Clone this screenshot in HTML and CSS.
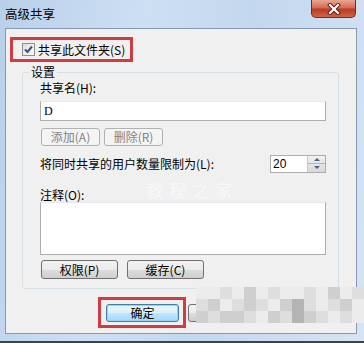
FILE: index.html
```html
<!DOCTYPE html>
<html lang="zh-CN">

<head>
    <meta charset="utf-8">
    <link rel="stylesheet" href="styles.css">
</head>

<body>
    <div class="window">
        <div class="titlebar">
            <div class="title">高级共享</div>
            <div class="close-btn">
                <svg width="16" height="12" viewBox="0 0 16 12">
                    <path d="M4 2 L12 10 M12 2 L4 10" stroke="#5a1a10" stroke-width="4" stroke-linecap="square"/>
                    <path d="M4 2 L12 10 M12 2 L4 10" stroke="#ffffff" stroke-width="2.2" stroke-linecap="square"/>
                </svg>
            </div>
        </div>

        <div class="client">
            <!-- share checkbox, highlighted -->
            <div class="share-row highlight">
                <span class="checkbox">
                    <svg width="11" height="11" viewBox="0 0 11 11">
                        <path d="M2 5.5 L4.5 8 L9 2.5" fill="none" stroke="#3d4f86" stroke-width="2"/>
                    </svg>
                </span>
                <span>共享此文件夹(S)</span>
            </div>

            <fieldset class="group">
                <legend>设置</legend>
                <div class="group-body">
                    <div class="label">共享名(H):</div>
                    <div class="textbox">D</div>

                    <div class="btn-row small-gap">
                        <button class="btn narrow" disabled>添加(A)</button>
                        <button class="btn narrow" disabled>删除(R)</button>
                    </div>

                    <div class="limit-row">
                        <span>将同时共享的用户数量限制为(L):</span>
                        <div class="spinner">
                            <span class="spin-value">20</span>
                            <span class="spin-arrows">
                                <span class="arrow up"></span>
                                <span class="arrow down"></span>
                            </span>
                        </div>
                    </div>

                    <div class="label comment-label">注释(O):</div>
                    <div class="textarea"></div>

                    <div class="btn-row wide-gap">
                        <button class="btn wide">权限(P)</button>
                        <button class="btn wide">缓存(C)</button>
                    </div>
                </div>
            </fieldset>

            <div class="footer">
                <div class="highlight ok-wrap">
                    <button class="btn default">确定</button>
                </div>
                <button class="btn footer-btn">取消</button>
            </div>

            <div class="watermark">教程之家</div>
        </div>

        <!-- pixelated area over the bottom right -->
        <div class="mosaic">
            <span class="m1"></span><span class="m1"></span><span class="m2"></span><span class="m1"></span><span class="m3"></span><span class="m1"></span><span class="m2"></span><span class="m1"></span><span class="m1"></span><span class="m2"></span><span class="m1"></span><span class="m3"></span><span class="m1"></span><span class="m2"></span>
            <span class="m2"></span><span class="m3"></span><span class="m1"></span><span class="m2"></span><span class="m3"></span><span class="m2"></span><span class="m1"></span><span class="m3"></span><span class="m4"></span><span class="m2"></span><span class="m1"></span><span class="m2"></span><span class="m3"></span><span class="m1"></span>
            <span class="m3"></span><span class="m2"></span><span class="m3"></span><span class="m3"></span><span class="m2"></span><span class="m1"></span><span class="m3"></span><span class="m2"></span><span class="m4"></span><span class="m3"></span><span class="m2"></span><span class="m1"></span><span class="m2"></span><span class="m1"></span>
        </div>
    </div>
</body>

</html>
```

FILE: styles.css
```css
body {
    margin: 0;
    font-family: "Noto Sans CJK SC", "Liberation Sans", sans-serif;
    font-size: 12px;
    color: #000;
}

.window {
    position: relative;
    width: 364px;
    height: 343px;
    overflow: hidden;
    display: flex;
    flex-direction: column;
    background: linear-gradient(100deg, #b9d0ea 0%, #cddff3 35%, #c3d7ee 60%, #d6e4f4 100%);
    border-bottom: 2px solid #3a4350;
    box-sizing: border-box;
}

.titlebar {
    height: 28px;
    display: flex;
    justify-content: space-between;
    align-items: flex-start;
    flex-shrink: 0;
}

.title {
    padding: 6px 0 0 5px;
    line-height: 16px;
    font-size: 12.5px;
}

.close-btn {
    width: 45px;
    height: 18px;
    margin-right: 8px;
    box-sizing: border-box;
    border: 1px solid #6b2d24;
    border-top: none;
    border-radius: 0 0 5px 5px;
    background: linear-gradient(#e9a593 0%, #d46c55 45%, #b83c22 55%, #cf6547 100%);
    display: flex;
    justify-content: center;
    align-items: center;
}

.client {
    position: relative;
    height: 306px;
    margin: 0 7px 0 5px;
    box-sizing: border-box;
    border: 1px solid #8799ae;
    background: #f0f0f0;
    display: flex;
    flex-direction: column;
    align-items: flex-start;
}

.highlight {
    border: 3px solid #d03c3f;
    box-sizing: border-box;
}

.share-row {
    margin: 8px 0 0 4px;
    width: 123px;
    height: 25px;
    display: flex;
    align-items: center;
    gap: 3px;
    padding-left: 9px;
    line-height: 14px;
}

.checkbox {
    width: 13px;
    height: 13px;
    box-sizing: border-box;
    border: 1px solid #8e8f8f;
    background: linear-gradient(135deg, #dcdcdc, #ffffff);
    display: flex;
    justify-content: center;
    align-items: center;
}

.group {
    margin: 3px 0 0 16px;
    width: 317px;
    padding: 0;
    box-sizing: border-box;
    border: 1px solid #d5dfe5;
    border-radius: 3px;
}

.group legend {
    margin-left: 6px;
    padding: 0 2px;
    line-height: 14px;
}

.group-body {
    padding: 2px 12px 9px 17px;
    display: flex;
    flex-direction: column;
}

.label {
    line-height: 14px;
}

.textbox {
    margin-top: 6px;
    height: 20px;
    box-sizing: border-box;
    border: 1px solid #abadb3;
    border-top-color: #e3e9ef;
    background: #fff;
    padding: 2px 3px;
    line-height: 14px;
    font-family: "Liberation Serif", serif;
}

.btn-row {
    display: flex;
    margin-left: 1px;
}

.small-gap {
    margin-top: 7px;
    gap: 4px;
}

.wide-gap {
    margin-top: 5px;
    gap: 9px;
}

.btn {
    font-family: inherit;
    font-size: 12px;
    height: 18px;
    padding: 0;
    box-sizing: border-box;
    border: 1px solid #707070;
    border-radius: 3px;
    background: linear-gradient(#f2f2f2 0%, #ebebeb 50%, #dddddd 51%, #cfcfcf 100%);
    color: #000;
    line-height: 16px;
}

.btn:disabled {
    border-color: #adb2b5;
    background: #f4f4f4;
    color: #838383;
}

.narrow {
    width: 59px;
}

.wide {
    width: 77px;
    height: 19px;
}

.limit-row {
    margin-top: 9px;
    height: 17px;
    display: flex;
    justify-content: space-between;
    align-items: center;
    padding-right: 0;
}

.spinner {
    width: 56px;
    height: 18px;
    box-sizing: border-box;
    border: 1px solid #abadb3;
    background: #fff;
    display: flex;
    justify-content: space-between;
}

.spin-value {
    font-family: "Liberation Sans", sans-serif;
    padding-left: 2px;
    line-height: 16px;
}

.spin-arrows {
    width: 17px;
    display: flex;
    flex-direction: column;
    border-left: 1px solid #c8c8c8;
    background: linear-gradient(#f2f2f2, #d8d8d8);
}

.arrow {
    flex: 1;
    display: flex;
    justify-content: center;
    align-items: center;
}

.arrow.up {
    border-bottom: 1px solid #b5b5b5;
}

.arrow.up::before {
    content: "";
    border: 3px solid transparent;
    border-bottom: 3px solid #4d6185;
    border-top: none;
}

.arrow.down::before {
    content: "";
    border: 3px solid transparent;
    border-top: 3px solid #4d6185;
    border-bottom: none;
}

.comment-label {
    margin-top: 16px;
}

.textarea {
    height: 53px;
    box-sizing: border-box;
    border: 1px solid #abadb3;
    border-top-color: #e3e9ef;
    background: #fff;
}

.footer {
    margin: 8px 0 0 92px;
    display: flex;
    align-items: flex-start;
    gap: 2px;
}

.ok-wrap {
    width: 88px;
    height: 31px;
    padding: 4px 0 0 5px;
}

.btn.default {
    width: 73px;
    border-color: #3c7fb1;
    background: linear-gradient(#eaf6fd 0%, #d9f0fc 50%, #bee6fd 51%, #a7d9f5 100%);
    box-shadow: inset 0 0 0 1px #9ad2f1;
}

.footer-btn {
    margin-top: 7px;
    width: 73px;
}

.watermark {
    position: absolute;
    left: 140px;
    top: 148px;
    font-size: 17px;
    letter-spacing: 6px;
    color: rgba(255, 255, 255, 0.55);
}

.mosaic {
    position: absolute;
    left: 196px;
    top: 287px;
    width: 168px;
    display: grid;
    grid-template-columns: repeat(14, 12px);
    grid-auto-rows: 12px;
}

.m1 {
    background: #ececec;
}

.m2 {
    background: #dedede;
}

.m3 {
    background: #cfcfcf;
}

.m4 {
    background: #b4b4b4;
}
```
